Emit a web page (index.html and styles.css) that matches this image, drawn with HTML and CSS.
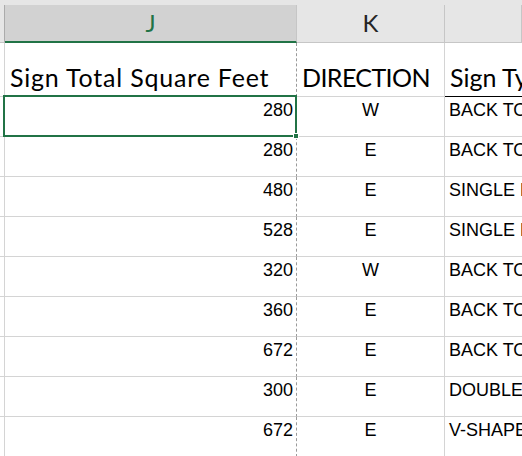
FILE: index.html
```html
<!DOCTYPE html>
<html>
<head>
<meta charset="utf-8">
<link rel="stylesheet" href="styles.css">
</head>
<body>
<div class="sheet">
  <div class="strip"></div>
  <div class="row colheads">
    <div class="c c0"></div>
    <div class="c cj hd sel">J</div>
    <div class="c ck hd">K</div>
    <div class="c cl hd"></div>
  </div>
  <div class="row titles">
    <div class="c c0"></div>
    <div class="c cj">Sign Total Square Feet</div>
    <div class="c ck">DIRECTION</div>
    <div class="c cl ul">Sign Type</div>
  </div>
  <div class="row data">
    <div class="c c0"></div>
    <div class="c cj num active">280<span class="handle"></span></div>
    <div class="c ck ctr">W</div>
    <div class="c cl">BACK TO BACK</div>
  </div>
  <div class="row data">
    <div class="c c0"></div>
    <div class="c cj num">280</div>
    <div class="c ck ctr">E</div>
    <div class="c cl">BACK TO BACK</div>
  </div>
  <div class="row data">
    <div class="c c0"></div>
    <div class="c cj num">480</div>
    <div class="c ck ctr">E</div>
    <div class="c cl">SINGLE FACE</div>
  </div>
  <div class="row data">
    <div class="c c0"></div>
    <div class="c cj num">528</div>
    <div class="c ck ctr">E</div>
    <div class="c cl">SINGLE FACE</div>
  </div>
  <div class="row data">
    <div class="c c0"></div>
    <div class="c cj num">320</div>
    <div class="c ck ctr">W</div>
    <div class="c cl">BACK TO BACK</div>
  </div>
  <div class="row data">
    <div class="c c0"></div>
    <div class="c cj num">360</div>
    <div class="c ck ctr">E</div>
    <div class="c cl">BACK TO BACK</div>
  </div>
  <div class="row data">
    <div class="c c0"></div>
    <div class="c cj num">672</div>
    <div class="c ck ctr">E</div>
    <div class="c cl">BACK TO BACK</div>
  </div>
  <div class="row data">
    <div class="c c0"></div>
    <div class="c cj num">300</div>
    <div class="c ck ctr">E</div>
    <div class="c cl">DOUBLE FACE</div>
  </div>
  <div class="row data">
    <div class="c c0"></div>
    <div class="c cj num">672</div>
    <div class="c ck ctr">E</div>
    <div class="c cl">V-SHAPED</div>
  </div>
</div>
</body>
</html>
```

FILE: styles.css
```css
* { box-sizing: border-box; }
html, body { margin: 0; padding: 0; background: #fff; }
body { width: 522px; height: 456px; overflow: hidden; }
.sheet { width: 522px; }
.strip { height: 5px; background: #e6e6e6; }
.row {
  display: grid;
  grid-template-columns: 5px 292px 148px 1fr;
}
.c {
  border-right: 1px solid #d4d4d4;
  border-bottom: 1px solid #d4d4d4;
  white-space: nowrap;
  overflow: hidden;
  color: #000;
}
.cj { border-right: 1px dashed #9a9a9a; }
.cl { border-right: none; }

.colheads .c {
  height: 38px;
  background: #e6e6e6;
  border-bottom: 1px solid #c6c6c6;
  border-right: 1px solid #c6c6c6;
}
.colheads .c0 { border-right: 1px solid #ababab; }
.hd {
  display: flex;
  align-items: center;
  justify-content: center;
  font-family: Lato, "Liberation Sans", sans-serif;
  font-size: 24px;
  color: #262626;
  padding-bottom: 2px;
}
.colheads .sel {
  background: #d2d2d2;
  color: #217346;
  border-bottom: 2px solid #217346;
  border-right: 1px solid #c6c6c6;
}

.titles .c {
  height: 54px;
  display: flex;
  align-items: flex-end;
  font-family: Lato, "Liberation Sans", sans-serif;
  font-size: 25px;
  line-height: 25px;
  padding-bottom: 6px;
}
.titles .cj { padding-left: 5px; letter-spacing: 0.8px; }
.titles .ck { padding-left: 5px; letter-spacing: -0.6px; }
.titles .cl { padding-left: 5px; border-bottom: 1px solid #000; }

.data .c {
  height: 40px;
  font-family: "Liberation Sans", Arial, sans-serif;
  font-size: 18px;
  line-height: 20px;
  padding-top: 3px;
}
.num { text-align: right; padding-right: 3px; }
.ctr { text-align: center; }
.data .cl { padding-left: 4px; }

.active { position: relative; overflow: visible; }
.active::before {
  content: "";
  position: absolute;
  left: -2px;
  top: -2px;
  right: -1px;
  bottom: -1px;
  border: 2px solid #217346;
  pointer-events: none;
}
.handle {
  position: absolute;
  right: -3px;
  bottom: -3px;
  width: 6px;
  height: 6px;
  background: #217346;
  border: 1px solid #fff;
  z-index: 2;
}
```
